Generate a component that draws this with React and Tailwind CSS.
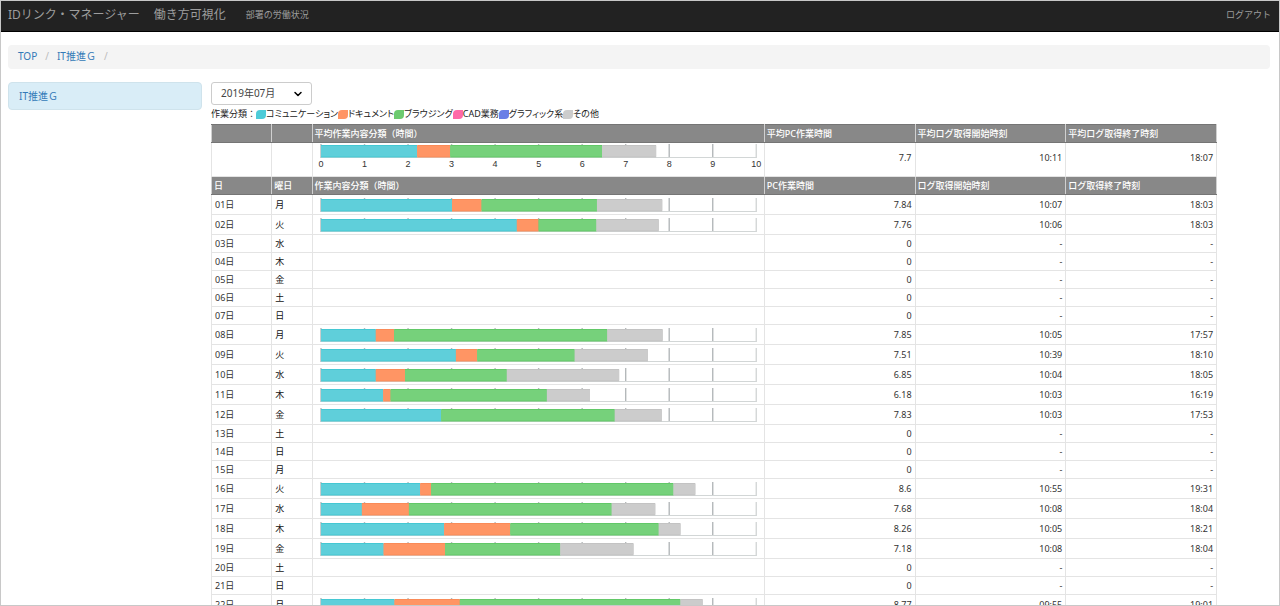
import { ChevronDown } from 'lucide-react'

const COLORS = ['#5fcfda', '#ff9564', '#76d17b', '#cccccc']
const EDGES = ['#45c8d3', '#f98b58', '#62c868', '#c3c3c3']

const legend = [
  { label: 'コミュニケーション', color: 'bg-[#4dcbd8]' },
  { label: 'ドキュメント', color: 'bg-[#ff9564]' },
  { label: 'ブラウジング', color: 'bg-[#6ccb70]' },
  { label: 'CAD業務', color: 'bg-[#ff69a8]' },
  { label: 'グラフィック系', color: 'bg-[#6a7fe6]' },
  { label: 'その他', color: 'bg-[#cccccc]' },
]

// stops: cumulative hours at the end of each category
const average = { stops: [2.21, 2.97, 6.46, 7.7], total: '7.7', start: '10:11', end: '18:07' }

const days = [
  { day: '01日', week: '月', stops: [3.01, 3.69, 6.34, 7.84], total: '7.84', start: '10:07', end: '18:03' },
  { day: '02日', week: '火', stops: [4.5, 5.0, 6.33, 7.76], total: '7.76', start: '10:06', end: '18:03' },
  { day: '03日', week: '水' },
  { day: '04日', week: '木' },
  { day: '05日', week: '金' },
  { day: '06日', week: '土' },
  { day: '07日', week: '日' },
  { day: '08日', week: '月', stops: [1.26, 1.68, 6.58, 7.85], total: '7.85', start: '10:05', end: '17:57' },
  { day: '09日', week: '火', stops: [3.1, 3.59, 5.83, 7.51], total: '7.51', start: '10:39', end: '18:10' },
  { day: '10日', week: '水', stops: [1.26, 1.93, 4.27, 6.85], total: '6.85', start: '10:04', end: '18:05' },
  { day: '11日', week: '木', stops: [1.43, 1.6, 5.19, 6.18], total: '6.18', start: '10:03', end: '16:19' },
  { day: '12日', week: '金', stops: [2.76, 2.76, 6.75, 7.83], total: '7.83', start: '10:03', end: '17:53' },
  { day: '13日', week: '土' },
  { day: '14日', week: '日' },
  { day: '15日', week: '月' },
  { day: '16日', week: '火', stops: [2.28, 2.53, 8.1, 8.6], total: '8.6', start: '10:55', end: '19:31' },
  { day: '17日', week: '水', stops: [0.94, 2.02, 6.68, 7.68], total: '7.68', start: '10:08', end: '18:04' },
  { day: '18日', week: '木', stops: [2.83, 4.35, 7.76, 8.26], total: '8.26', start: '10:05', end: '18:21' },
  { day: '19日', week: '金', stops: [1.44, 2.85, 5.5, 7.18], total: '7.18', start: '10:08', end: '18:04' },
  { day: '20日', week: '土' },
  { day: '21日', week: '日' },
  { day: '22日', week: '月', stops: [1.69, 3.19, 8.26, 8.77], total: '8.77', start: '09:55', end: '19:01' },
]

function HoursChart({ stops, axis }) {
  const ticks = Array.from({ length: 11 }, (_, i) => i)
  return (
    <svg className={`block w-full overflow-visible ${axis ? 'h-7' : 'h-3.5'}`} aria-hidden={!axis}>
      {ticks.map(n => (
        <line key={n} x1={`${n * 10}%`} x2={`${n * 10}%`} y1="0" y2="14"
          stroke={n === 10 ? '#d4d7d7' : '#b4b8ba'} strokeWidth="1.4" />
      ))}
      <line x1="0" x2="100%" y1="13.5" y2="13.5" stroke="#d2d6d6" />
      {stops.map((stop, i) => {
        const from = i === 0 ? 0 : stops[i - 1]
        if (stop === from) return null
        return (
          <g key={i}>
            <rect x={`${from * 10}%`} width={`${(stop - from) * 10}%`} y="1" height="12.5" fill={EDGES[i]} />
            <rect x={`${from * 10}%`} width={`${(stop - from) * 10}%`} y="2" height="10.5" fill={COLORS[i]} />
          </g>
        )
      })}
      {axis && ticks.map(n => (
        <text key={n} x={`${n * 10}%`} y="23" textAnchor="middle" fill="#333"
          className="text-[9px] font-[Liberation_Sans,Arial,sans-serif]">{n}</text>
      ))}
    </svg>
  )
}

function HeadRow({ labels }) {
  return (
    <tr className="h-[18px] bg-[#888] text-white">
      {labels.map((label, i) => (
        <th key={i} scope="col"
          className="border-x border-y border-x-[#d0d0d0] border-y-[#757575] px-0.5 text-left font-medium whitespace-nowrap">
          {label}
        </th>
      ))}
    </tr>
  )
}

function DataRow({ row, axis }) {
  const height = axis ? 'h-[34px]' : row.stops ? 'h-[20px]' : 'h-[18px]'
  const cell = axis ? 'border border-[#e4e4e4] pb-1' : 'border border-[#e4e4e4]'
  return (
    <tr className={height}>
      <td className={`${cell} px-[3px]`}>{row.day}</td>
      <td className={`${cell} px-[3px] text-[#111]`}>{row.week}</td>
      <td className={`${cell} px-2`}>{row.stops && <HoursChart stops={row.stops} axis={axis} />}</td>
      <td className={`${cell} px-[3px] text-right`}>{row.total || '0'}</td>
      <td className={`${cell} px-[3px] text-right`}>{row.start || '-'}</td>
      <td className={`${cell} px-[3px] text-right`}>{row.end || '-'}</td>
    </tr>
  )
}

export default function App() {
  return (
    <div className="h-screen overflow-hidden border border-[#c8c8c8] bg-white font-['Noto_Sans','Noto_Sans_CJK_JP',sans-serif] text-[#333]">
      <header className="flex h-[31px] items-center border-b border-black bg-[#222] pb-0.5 pl-[7px] pr-2 text-[#9d9d9d]">
        <a href="#" className="text-[12px] leading-4">IDリンク・マネージャー</a>
        <a href="#" className="ml-3.5 text-[12px] leading-4">働き方可視化</a>
        <nav className="ml-5 flex flex-1 justify-between text-[9px] leading-4">
          <a href="#">部署の労働状況</a>
          <a href="#">ログアウト</a>
        </nav>
      </header>

      <nav aria-label="breadcrumb" className="ml-[7px] mr-[9px] mt-[13px] rounded-sm bg-[#f4f4f4] px-2.5 pb-0.5 text-[10px] leading-[22px] text-[#337ab7]">
        <ol className="flex">
          <li><a href="#">TOP</a><span className="px-2 text-[#bbb]">/</span></li>
          <li><a href="#">IT推進Ｇ</a><span className="px-2 text-[#bbb]">/</span></li>
        </ol>
      </nav>

      <div className="mt-[13px] flex items-start gap-[9px] pl-[7px] pr-[9px]">
        <aside className="w-[194px] shrink-0">
          <a href="#" className="block rounded-sm border border-[#cfe3ec] bg-[#d9edf7] px-2.5 text-[10px] leading-[26px] text-[#337ab7]">
            IT推進Ｇ
          </a>
        </aside>

        <main className="min-w-0 flex-1 text-[9px] leading-3">
          <div className="relative w-[101px]">
            <select aria-label="対象月" defaultValue="2019-07"
              className="block h-[23px] w-full appearance-none rounded-[3px] border border-[#ccc] bg-white pb-0.5 pl-[9px] text-[10px] text-[#444]">
              <option value="2019-07">2019年07月</option>
            </select>
            <ChevronDown size={12} strokeWidth={3} className="pointer-events-none absolute right-2 top-1.5 text-black" />
          </div>

          <div className="mt-[3px] flex items-center leading-3 whitespace-nowrap text-[#222]">
            <span>作業分類：</span>
            {legend.map(item => (
              <span key={item.label} className="flex items-center [font-feature-settings:'palt']">
                <span className={`h-[9px] w-[10px] rounded-tl-sm rounded-br-sm ${item.color}`} />
                {item.label}
              </span>
            ))}
          </div>

          <table className="mt-1 w-[95%] table-fixed border-collapse">
            <colgroup>
              <col className="w-[60px]" />
              <col className="w-[40px]" />
              <col className="w-[45%]" />
              <col className="w-[15%]" />
              <col className="w-[15%]" />
              <col className="w-[15%]" />
            </colgroup>
            <tbody>
              <HeadRow labels={['', '', '平均作業内容分類（時間）', '平均PC作業時間', '平均ログ取得開始時刻', '平均ログ取得終了時刻']} />
              <DataRow row={average} axis />
              <HeadRow labels={['日', '曜日', '作業内容分類（時間）', 'PC作業時間', 'ログ取得開始時刻', 'ログ取得終了時刻']} />
              {days.map(row => <DataRow key={row.day} row={row} />)}
            </tbody>
          </table>
        </main>
      </div>
    </div>
  )
}
